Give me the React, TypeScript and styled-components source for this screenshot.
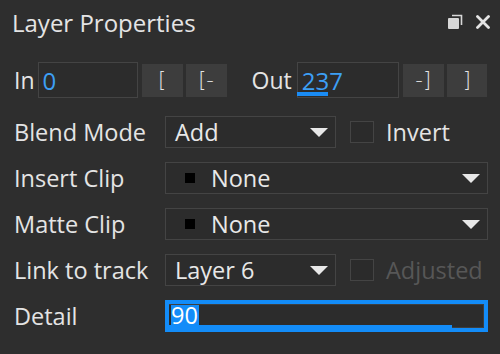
import React from 'react';
import styled, { createGlobalStyle } from 'styled-components';

const GlobalStyle = createGlobalStyle`
  html, body {
    margin: 0;
    padding: 0;
    background: #2e2e2e;
  }
  body {
    font-family: "Open Sans", Lato, sans-serif;
    color: #e4e4e4;
  }
`;

const Panel = styled.div`
  width: 500px;
  height: 354px;
  box-sizing: border-box;
  padding: 0 12px 0 14px;
  background: #2e2e2e;
  overflow: hidden;
`;

const Header = styled.div`
  height: 44px;
  display: flex;
  align-items: center;
  justify-content: space-between;
  margin-left: -2px;
`;

const Title = styled.div`
  font-size: 24px;
  color: #e4e4e4;
`;

const HeaderIcons = styled.div`
  display: flex;
  align-items: center;
  gap: 13px;
  margin-right: -2px;
`;

const Body = styled.div`
  padding-top: 18px;
  display: flex;
  flex-direction: column;
  gap: 14px;
`;

const RangeRow = styled.div`
  height: 36px;
  display: flex;
  align-items: center;
  margin-bottom: 4px;
`;

const InlineLabel = styled.span<{ $gap: number; $lead?: number }>`
  font-size: 23px;
  margin-right: ${({ $gap }) => $gap}px;
  margin-left: ${({ $lead }) => $lead ?? 0}px;
`;

const NumberField = styled.div<{ $w: number }>`
  position: relative;
  width: ${({ $w }) => $w}px;
  height: 36px;
  box-sizing: border-box;
  border: 1px solid #444444;
  background: #2c2c2c;
  display: flex;
  align-items: center;
  padding-left: 4px;
  font-size: 24px;
  color: #3d9ff5;
`;

const FieldBar = styled.div<{ $pct: number }>`
  position: absolute;
  left: -1px;
  bottom: 1px;
  height: 4px;
  width: ${({ $pct }) => $pct}%;
  background: #1a8cf5;
`;

const BracketButton = styled.button<{ $first?: boolean; $w?: number }>`
  width: ${({ $w }) => $w ?? 41}px;
  height: 33px;
  margin-left: ${({ $first }) => ($first ? 4 : 3)}px;
  border: none;
  padding: 0;
  background: #3d3d3d;
  color: #e4e4e4;
  font-family: "DejaVu Sans", sans-serif;
  font-size: 21px;
  font-weight: 300;
  line-height: 1;
`;

const FormRow = styled.div`
  height: 32px;
  display: grid;
  grid-template-columns: 151px 1fr;
  align-items: center;
`;

const Label = styled.span`
  font-size: 23.5px;
  color: #e4e4e4;
  white-space: nowrap;
`;

const Controls = styled.div`
  display: flex;
  align-items: center;
  height: 32px;
`;

const Select = styled.div<{ $w?: number }>`
  width: ${({ $w }) => ($w ? `${$w}px` : '100%')};
  height: 32px;
  box-sizing: border-box;
  border: 1px solid #444444;
  background: #2c2c2c;
  display: flex;
  align-items: center;
  padding: 0 7px 0 9px;
  font-size: 23.5px;
  color: #e8e8e8;
  white-space: nowrap;
`;

const SelectText = styled.span`
  flex: 1;
`;

const Swatch = styled.span`
  width: 10px;
  height: 10px;
  background: #000;
  margin: 0 16px 0 10px;
`;

const Caret = styled.span`
  width: 0;
  height: 0;
  border-left: 9px solid transparent;
  border-right: 9px solid transparent;
  border-top: 9px solid #e8e8e8;
`;

const Check = styled.span`
  width: 24px;
  height: 22px;
  box-sizing: border-box;
  border: 1px solid #444444;
  background: #2b2b2b;
  margin: 0 12px 0 14px;
`;

const CheckLabel = styled.span<{ $disabled?: boolean }>`
  font-size: 23.5px;
  color: ${({ $disabled }) => ($disabled ? '#575757' : '#e4e4e4')};
`;

const FocusFrame = styled.div`
  height: 32px;
  box-sizing: border-box;
  border: 4px solid #138cf8;
  background: #138cf8;
`;

const DetailInput = styled.div`
  position: relative;
  height: 100%;
  box-sizing: border-box;
  border: 1px solid #3e3e3e;
  border-left: none;
  background: #2c2c2c;
  display: flex;
  align-items: stretch;
  font-size: 23.5px;
`;

const Selection = styled.span`
  display: flex;
  align-items: center;
  background: #138cf8;
  color: #ffffff;
  border-left: 2px solid #2c2c2c;
  padding-right: 1px;
  margin-bottom: 2px;
`;

const DetailBar = styled.div<{ $pct: number }>`
  position: absolute;
  left: 0;
  bottom: -1px;
  height: 3px;
  width: ${({ $pct }) => $pct}%;
  background: #138cf8;
`;

const RestoreIcon = () => (
  <svg width="16" height="16" viewBox="0 0 16 16">
    <path d="M5 1.5h9.5V11" fill="none" stroke="#d8d8d8" strokeWidth="1.6" />
    <rect x="1" y="4" width="11" height="11" rx="1" fill="#d8d8d8" />
  </svg>
);

const CloseIcon = () => (
  <svg width="14" height="14" viewBox="0 0 14 14">
    <path d="M1.5 1.5l11 11M12.5 1.5l-11 11" stroke="#e4e4e4" strokeWidth="2.8" strokeLinecap="round" />
  </svg>
);

export default function App() {
  return (
    <>
      <GlobalStyle />
      <Panel>
        <Header>
          <Title>Layer Properties</Title>
          <HeaderIcons>
            <RestoreIcon />
            <CloseIcon />
          </HeaderIcons>
        </Header>
        <Body>
          <RangeRow>
            <InlineLabel $gap={3}>In</InlineLabel>
            <NumberField $w={100}>0</NumberField>
            <BracketButton $first>[</BracketButton>
            <BracketButton>[-</BracketButton>
            <InlineLabel $gap={5} $lead={25}>Out</InlineLabel>
            <NumberField $w={102}>
              237
              <FieldBar $pct={31} />
            </NumberField>
            <BracketButton $first>-]</BracketButton>
            <BracketButton $w={40}>]</BracketButton>
          </RangeRow>

          <FormRow>
            <Label>Blend Mode</Label>
            <Controls>
              <Select $w={171}>
                <SelectText>Add</SelectText>
                <Caret />
              </Select>
              <Check />
              <CheckLabel>Invert</CheckLabel>
            </Controls>
          </FormRow>

          <FormRow>
            <Label>Insert Clip</Label>
            <Select>
              <Swatch />
              <SelectText>None</SelectText>
              <Caret />
            </Select>
          </FormRow>

          <FormRow>
            <Label>Matte Clip</Label>
            <Select>
              <Swatch />
              <SelectText>None</SelectText>
              <Caret />
            </Select>
          </FormRow>

          <FormRow>
            <Label>Link to track</Label>
            <Controls>
              <Select $w={171}>
                <SelectText>Layer 6</SelectText>
                <Caret />
              </Select>
              <Check />
              <CheckLabel $disabled>Adjusted</CheckLabel>
            </Controls>
          </FormRow>

          <FormRow>
            <Label>Detail</Label>
            <FocusFrame>
              <DetailInput>
                <Selection>90</Selection>
                <DetailBar $pct={90} />
              </DetailInput>
            </FocusFrame>
          </FormRow>
        </Body>
      </Panel>
    </>
  );
}
